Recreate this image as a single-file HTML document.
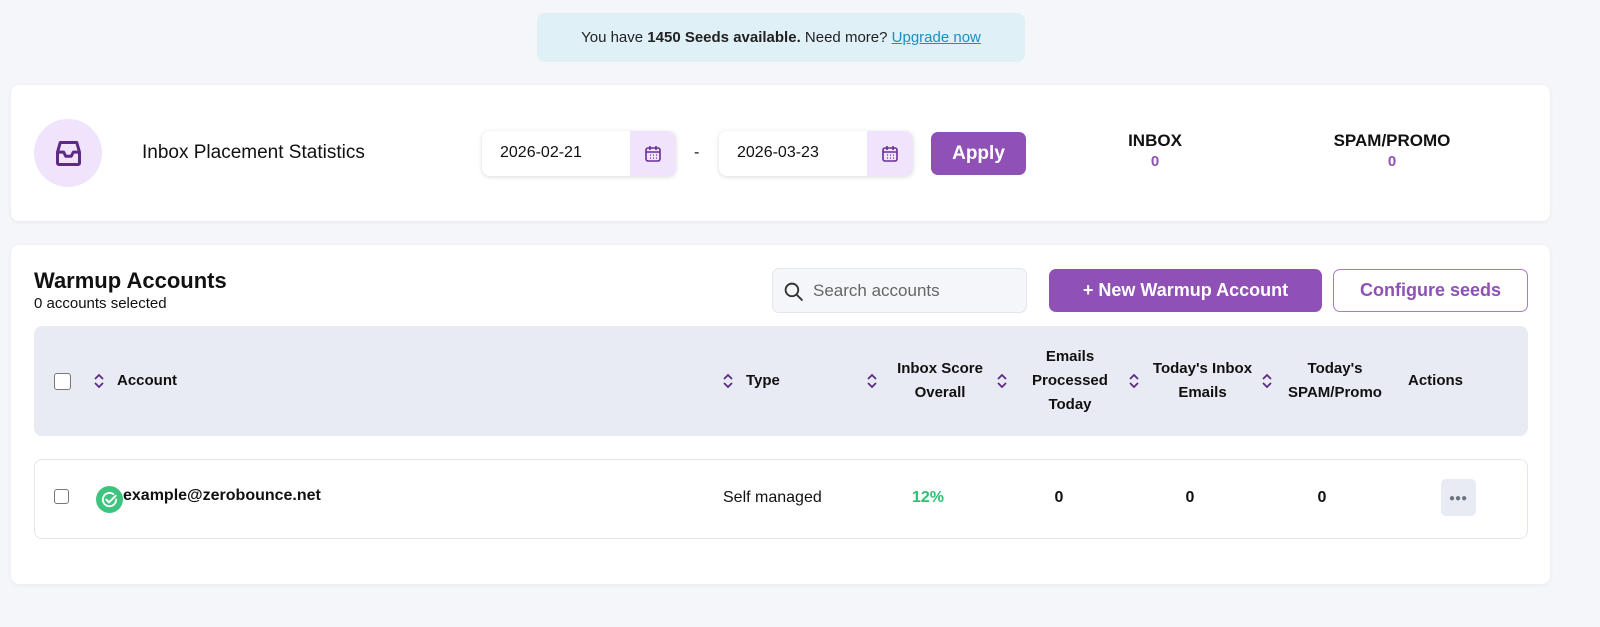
<!DOCTYPE html>
<html><head><style>
*{box-sizing:border-box;margin:0;padding:0}
body{width:1600px;height:627px;background:#f5f6fa;font-family:"Liberation Sans",sans-serif;color:#111;position:relative;overflow:hidden}
.a{position:absolute}
.card{background:#fff;border-radius:8px;box-shadow:0 1px 4px rgba(0,0,0,.06)}
.c{text-align:center}
.th{font-weight:bold;font-size:15px;line-height:24px}
.sort{width:10px;height:18px}
.cb{width:17px;height:17px;border:1.5px solid #777;border-radius:3px;background:#fff}
</style></head><body>
<div class="a" style="left:537px;top:13px;width:488px;height:49px;background:#dff0f6;border-radius:8px;font-size:15px;line-height:49px;text-align:center;color:#222">You have <b>1450 Seeds available.</b> Need more? <span style="color:#1a8fc4;text-decoration:underline">Upgrade now</span></div>

<div class="a card" style="left:11px;top:85px;width:1539px;height:136px"></div>
<div class="a" style="left:34px;top:119px;width:68px;height:68px;border-radius:50%;background:#efe4fb"></div>
<svg class="a" style="left:52px;top:137px" width="33" height="33" viewBox="0 0 24 24" fill="none" stroke="#5e2a86" stroke-width="2.2" stroke-linejoin="round" stroke-linecap="round"><path d="M4 11 L6 4 H18 L20 11 V19 A1 1 0 0 1 19 20 H5 A1 1 0 0 1 4 19 Z M4 11 H8.5 L10 14 H14 L15.5 11 H20"/></svg>
<div class="a" style="left:142px;top:142px;font-size:19px">Inbox Placement Statistics</div>

<div class="a" style="left:482px;top:131px;width:194px;height:45px;border-radius:8px;background:#fff;box-shadow:0 1px 5px rgba(0,0,0,.15);overflow:hidden"><div style="position:absolute;left:148px;top:0;width:46px;height:45px;background:#efe4fb"></div><span style="position:absolute;left:18px;top:13px;font-size:16px">2026-02-21</span><svg style="position:absolute;left:161px;top:13px" width="20" height="20" viewBox="0 0 20 20" fill="none" stroke="#6a2e96" stroke-width="1.6"><rect x="3" y="4" width="14" height="13" rx="2"/><path d="M7 2v4M13 2v4M3 8h14"/><path d="M7 11h1M10 11h1M13 11h1M7 14h1M10 14h1M13 14h1" stroke-width="1.3"/></svg></div>
<div class="a" style="left:694px;top:144px;font-size:16px">-</div>
<div class="a" style="left:719px;top:131px;width:194px;height:45px;border-radius:8px;background:#fff;box-shadow:0 1px 5px rgba(0,0,0,.15);overflow:hidden"><div style="position:absolute;left:148px;top:0;width:46px;height:45px;background:#efe4fb"></div><span style="position:absolute;left:18px;top:13px;font-size:16px">2026-03-23</span><svg style="position:absolute;left:161px;top:13px" width="20" height="20" viewBox="0 0 20 20" fill="none" stroke="#6a2e96" stroke-width="1.6"><rect x="3" y="4" width="14" height="13" rx="2"/><path d="M7 2v4M13 2v4M3 8h14"/><path d="M7 11h1M10 11h1M13 11h1M7 14h1M10 14h1M13 14h1" stroke-width="1.3"/></svg></div>
<div class="a c" style="left:931px;top:132px;width:95px;height:43px;border-radius:7px;background:#8f51b5;color:#fff;font-weight:bold;font-size:19px;line-height:43px">Apply</div>
<div class="a c" style="left:1095px;top:131px;width:120px;font-weight:bold;font-size:17px">INBOX<div style="color:#8f51b5;font-size:15px;margin-top:2px">0</div></div>
<div class="a c" style="left:1312px;top:131px;width:160px;font-weight:bold;font-size:17px">SPAM/PROMO<div style="color:#8f51b5;font-size:15px;margin-top:2px">0</div></div>

<div class="a card" style="left:11px;top:245px;width:1539px;height:339px"></div>
<div class="a" style="left:34px;top:268px;font-size:22px;font-weight:bold">Warmup Accounts</div>
<div class="a" style="left:34px;top:295px;font-size:15px">0 accounts selected</div>
<div class="a" style="left:772px;top:268px;width:255px;height:45px;border-radius:7px;background:#f5f6fa;border:1px solid #e4e6ee"><svg style="position:absolute;left:10px;top:12px" width="21" height="21" viewBox="0 0 20 20" fill="none" stroke="#333" stroke-width="1.8"><circle cx="8.5" cy="8.5" r="6"/><path d="M13 13l5 5" stroke-linecap="round"/></svg><span style="position:absolute;left:40px;top:12px;font-size:17px;color:#666">Search accounts</span></div>
<div class="a c" style="left:1049px;top:269px;width:273px;height:43px;border-radius:7px;background:#8f51b5;color:#fff;font-weight:bold;font-size:18px;line-height:43px">+ New Warmup Account</div>
<div class="a c" style="left:1333px;top:269px;width:195px;height:43px;border-radius:7px;border:1.5px solid #a77cc5;color:#8f51b5;font-weight:bold;font-size:18px;line-height:40px">Configure seeds</div>

<div class="a" style="left:34px;top:326px;width:1494px;height:110px;border-radius:8px;background:#e8ebf3"></div>
<div class="a cb" style="left:54px;top:373px"></div>
<svg width="0" height="0" style="position:absolute"><defs><g id="s"><path d="M1 7 L5 3 L9 7 M1 11 L5 15 L9 11" fill="none" stroke="#5e2a86" stroke-width="1.8"/></g></defs></svg>
<svg class="a sort" style="left:94px;top:372px"><use href="#s"/></svg>
<div class="a th" style="left:117px;top:369px">Account</div>
<svg class="a sort" style="left:723px;top:372px"><use href="#s"/></svg>
<div class="a th" style="left:746px;top:369px">Type</div>
<svg class="a sort" style="left:867px;top:372px"><use href="#s"/></svg>
<div class="a th c" style="left:885px;top:357px;width:110px">Inbox Score<br>Overall</div>
<svg class="a sort" style="left:997px;top:372px"><use href="#s"/></svg>
<div class="a th c" style="left:1015px;top:345px;width:110px">Emails<br>Processed<br>Today</div>
<svg class="a sort" style="left:1129px;top:372px"><use href="#s"/></svg>
<div class="a th c" style="left:1145px;top:357px;width:115px">Today's Inbox<br>Emails</div>
<svg class="a sort" style="left:1262px;top:372px"><use href="#s"/></svg>
<div class="a th c" style="left:1275px;top:357px;width:120px">Today's<br>SPAM/Promo</div>
<div class="a th" style="left:1408px;top:369px">Actions</div>

<div class="a" style="left:34px;top:459px;width:1494px;height:80px;border-radius:8px;border:1px solid #e4e6ee;background:#fff"></div>
<div class="a cb" style="left:54px;top:489px;width:15px;height:15px"></div>
<div class="a" style="left:96px;top:486px;width:27px;height:27px;border-radius:50%;background:#3ec47f"></div>
<svg class="a" style="left:100px;top:490px" width="19" height="19" viewBox="0 0 20 20" fill="none" stroke="#fff" stroke-width="2" stroke-linecap="round"><path d="M17 10a7 7 0 1 1-3-5.7"/><path d="M6.5 10l3 3 7-7"/></svg>
<div class="a" style="left:123px;top:487px;font-size:16px;font-weight:bold">example@zerobounce.net</div>
<div class="a" style="left:723px;top:489px;font-size:16px">Self managed</div>
<div class="a c" style="left:888px;top:489px;width:80px;font-size:16px;font-weight:bold;color:#2fbf71">12%</div>
<div class="a c" style="left:1039px;top:489px;width:40px;font-size:16px;font-weight:bold">0</div>
<div class="a c" style="left:1170px;top:489px;width:40px;font-size:16px;font-weight:bold">0</div>
<div class="a c" style="left:1302px;top:489px;width:40px;font-size:16px;font-weight:bold">0</div>
<div class="a" style="left:1441px;top:479px;width:35px;height:37px;border-radius:5px;background:#e8ebf3"></div>
<div class="a" style="left:1449px;top:493px;font-size:10px;color:#6b7280;letter-spacing:0px">●●●</div>
</body></html>
